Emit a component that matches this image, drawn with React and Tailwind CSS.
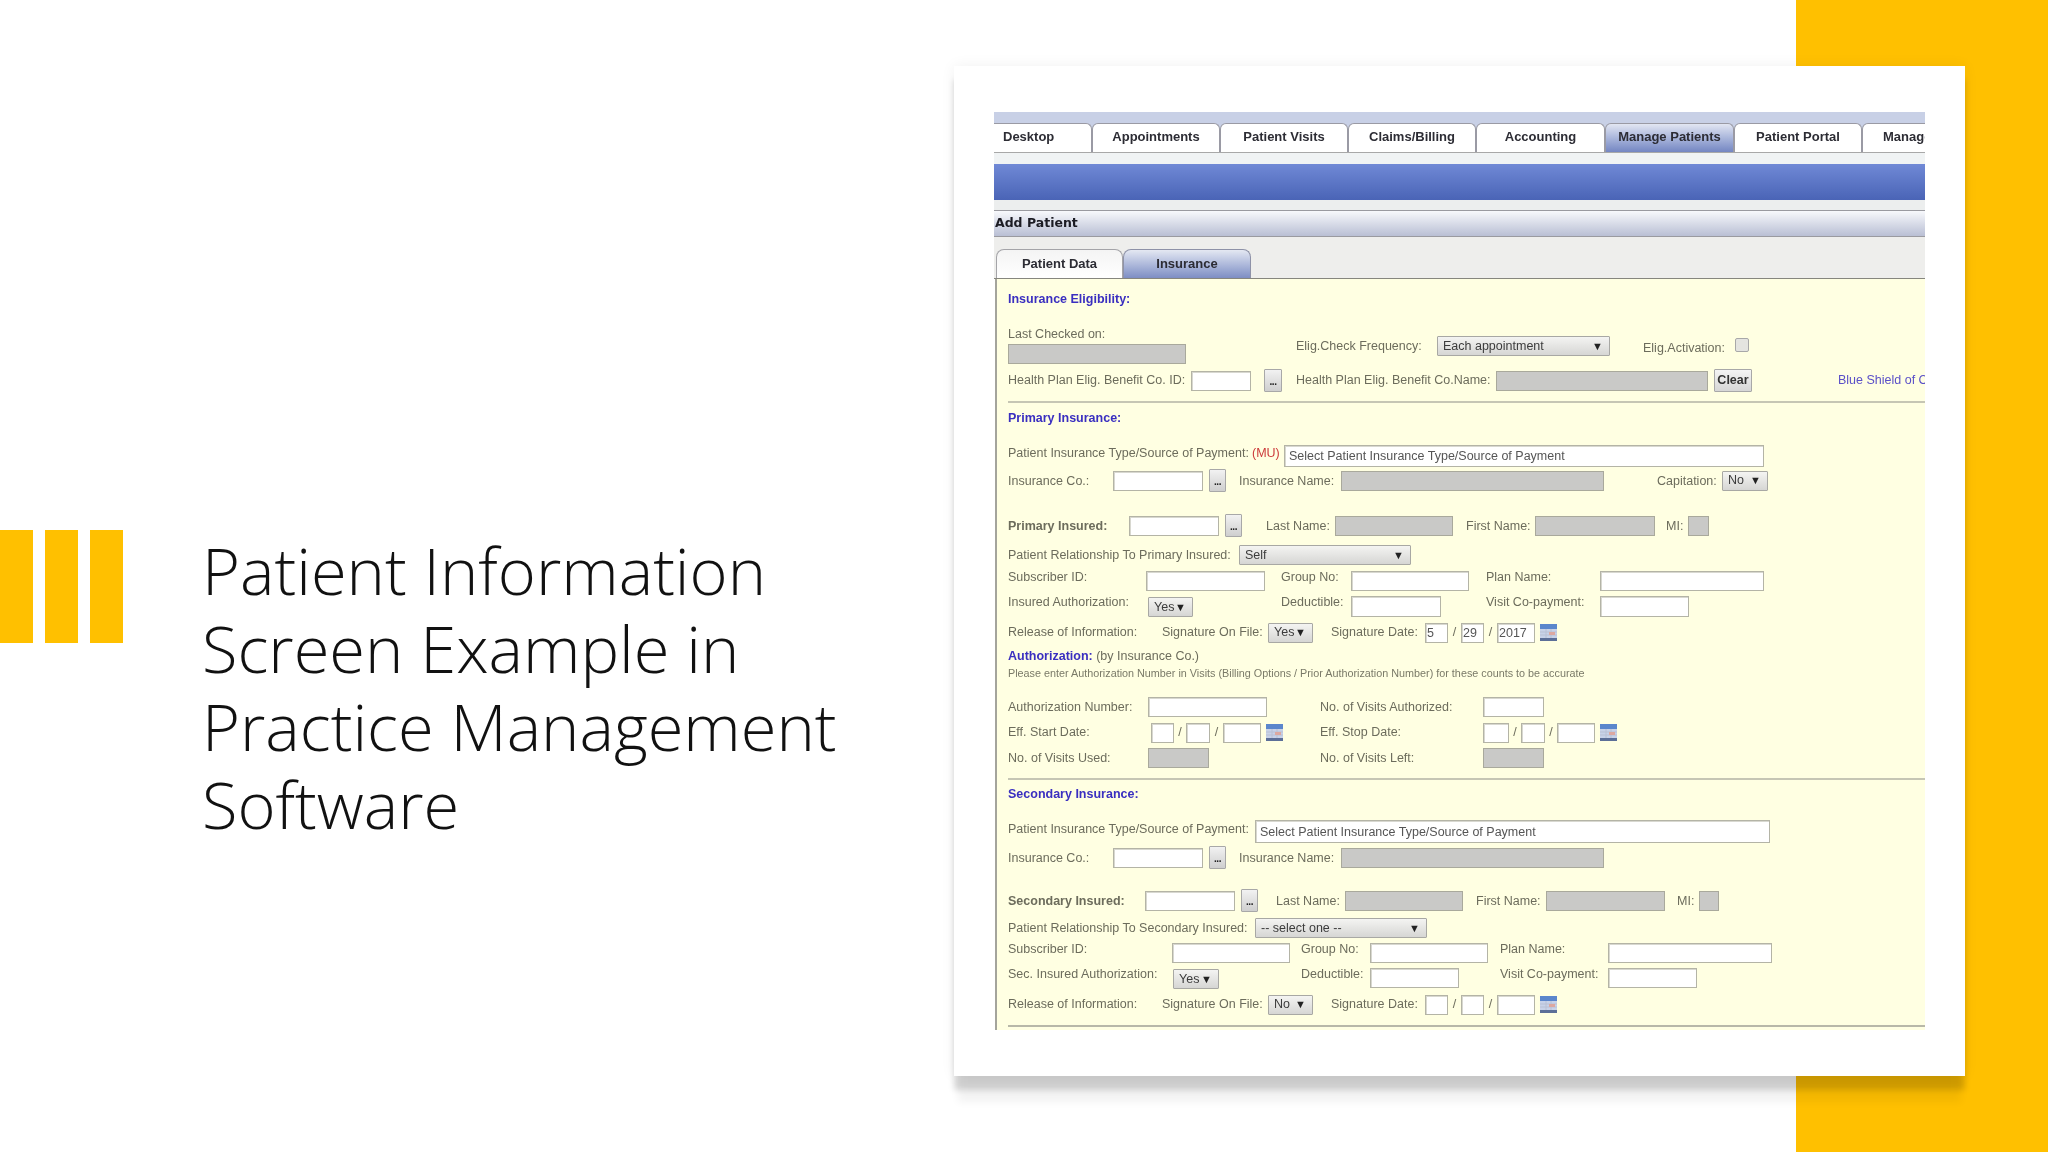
const tabs = [
  { name: 'Desktop', width: 'w-[98px]', align: 'pl-[9px] rounded-tl-none border-l-0' },
  { name: 'Appointments', width: 'w-[128px]', align: 'justify-center' },
  { name: 'Patient Visits', width: 'w-[128px]', align: 'justify-center' },
  { name: 'Claims/Billing', width: 'w-[128px]', align: 'justify-center' },
  { name: 'Accounting', width: 'w-[129px]', align: 'justify-center' },
  { name: 'Manage Patients', width: 'w-[129px]', align: 'justify-center', active: true },
  { name: 'Patient Portal', width: 'w-[128px]', align: 'justify-center' },
  { name: 'Manage', width: 'w-[128px]', align: 'pl-[20px]' },
];

const Row = ({ className = '', children }) => (
  <div className={`flex items-center whitespace-nowrap ${className}`}>{children}</div>
);

const Lbl = ({ className = '', children }) => (
  <span className={`shrink-0 text-[12.5px] text-[#6c6c5c] ${className}`}>{children}</span>
);

const Heading = ({ className = '', children }) => (
  <div className={`text-[12.5px] font-bold text-[#3a2fc0] ${className}`}>{children}</div>
);

const Field = ({ className = '', value = '' }) => (
  <input
    readOnly
    value={value}
    className={`h-[20px] shrink-0 border border-[#b4b4a6] bg-white px-[1px] font-['Liberation_Sans',sans-serif] text-[12.5px] text-[#555] shadow-[inset_1px_1px_0_#d8d8d0] ${className}`}
  />
);

const Gray = ({ className = '' }) => (
  <div className={`h-[20px] shrink-0 border border-[#a9a99c] bg-[#c9c9c7] ${className}`}></div>
);

const Dots = ({ className = '' }) => (
  <button className={`flex h-[23px] w-[17px] shrink-0 items-end justify-center rounded-[1px] border border-[#a8a8a8] bg-linear-to-b from-[#f2f2f2] to-[#cfcfcf] pb-[4px] text-[10px] leading-[10px] font-bold tracking-[-0.5px] text-[#222] ${className}`}>
    ...
  </button>
);

const Sel = ({ className = '', value }) => (
  <div className={`flex h-[20px] shrink-0 items-center justify-between rounded-[1px] border border-[#a8a8a4] bg-linear-to-b from-[#f4f4f2] to-[#d6d6d4] pr-[6px] pl-[5px] text-[12.5px] text-[#3c3c3c] ${className}`}>
    <span>{value}</span>
    <span className="text-[11px] text-[#222]">▼</span>
  </div>
);

const Slash = ({ className = '' }) => (
  <span className={`shrink-0 text-center text-[12.5px] text-[#6c6c5c] ${className}`}>/</span>
);

const Cal = ({ className = '' }) => (
  <svg viewBox="0 0 17 17" className={`h-[17px] w-[17px] shrink-0 ${className}`}>
    <rect width="17" height="17" fill="#c8d2e8" />
    <rect width="17" height="5" fill="#5b86cc" />
    <rect y="14" width="17" height="3" fill="#5c6f98" />
    <path d="M0 8h17M0 11h17M6 5v9M11 5v9" stroke="#b8c0d4" strokeWidth="1" />
    <rect x="9" y="8" width="6" height="3" fill="#dca8a0" />
  </svg>
);

const Divider = ({ className = '' }) => (
  <div className={`h-[2px] bg-[#c6c6b4] ${className}`}></div>
);

const Screenshot = () => (
  <div className="w-[931px] overflow-hidden font-['Liberation_Sans',sans-serif] blur-[0.5px]">
    {/* Main tabs */}
    <div className="h-[11px] bg-[#c8d0e6]"></div>
    <div className="flex h-[29px] bg-[#c8d0e6]">
      {tabs.map((tab) => (
        <div
          key={tab.name}
          className={`flex shrink-0 items-center overflow-hidden rounded-t-[6px] border-x border-t border-[#9a9aa4] pb-[2px] text-[13px] font-bold whitespace-nowrap text-[#2c2c34] ${tab.width} ${tab.align} ${
            tab.active ? 'bg-linear-to-b from-[#e2e6f2] to-[#7486c2]' : 'bg-white'
          }`}
        >
          {tab.name}
        </div>
      ))}
    </div>
    <div className="h-[12px] border-t border-[#a8a8a8] bg-[#f0f3f4]"></div>
    <div className="h-[36px] bg-linear-to-b from-[#7089d6] to-[#4a64b6]"></div>
    <div className="h-[10px] bg-[#eceeee]"></div>

    {/* Add Patient header */}
    <div className="flex h-[27px] items-center border-y border-[#9a9aa0] bg-linear-to-b from-[#f8f9fc] to-[#b9bfd4] pl-[1px] font-['DejaVu_Sans',sans-serif] text-[12.5px] font-bold text-[#1c1c24]">
      Add Patient
    </div>

    {/* Sub tabs */}
    <div className="flex h-[42px] items-end border-b border-[#86867e] bg-[#eeeeec] pl-[2px]">
      <div className="flex h-[29px] w-[127px] items-center justify-center rounded-t-[8px] border-x border-t border-[#a4a4a8] bg-linear-to-b from-[#f4f4f4] to-white text-[13px] font-bold text-[#2c2c34]">
        Patient Data
      </div>
      <div className="flex h-[29px] w-[128px] items-center justify-center rounded-t-[8px] border-x border-t border-[#8e92a8] bg-linear-to-b from-[#e4e8f2] to-[#7e8ec4] text-[13px] font-bold text-[#2c2c34]">
        Insurance
      </div>
    </div>

    {/* Form panel */}
    <div className="ml-[1px] h-[751px] border-l-2 border-[#a4a49c] bg-[#ffffe2] pt-[10px] pl-[11px]">
      <Heading className="h-[20px] leading-[20px]">Insurance Eligibility:</Heading>

      <Row className="mt-[16px] h-[39px] !items-start">
        <div className="w-[288px] shrink-0">
          <Lbl className="block h-[18px] leading-[18px]">Last Checked on:</Lbl>
          <Gray className="mt-[1px] w-[178px]" />
        </div>
        <Lbl className="mt-[11px] h-[20px] w-[141px] leading-[20px]">Elig.Check Frequency:</Lbl>
        <Sel className="mt-[11px] w-[173px]" value="Each appointment" />
        <Lbl className="mt-[13px] ml-[33px] h-[20px] w-[92px] leading-[20px]">Elig.Activation:</Lbl>
        <div className="mt-[13px] h-[14px] w-[14px] rounded-[2px] border border-[#a8a8a8] bg-[#e4e4e0]"></div>
      </Row>

      <Row className="mt-[5px] h-[23px]">
        <Lbl className="w-[183px]">Health Plan Elig. Benefit Co. ID:</Lbl>
        <Field className="w-[60px]" />
        <Dots className="ml-[13px] w-[18px]" />
        <Lbl className="ml-[14px] w-[200px]">Health Plan Elig. Benefit Co.Name:</Lbl>
        <Gray className="w-[212px]" />
        <button className="ml-[6px] h-[23px] w-[38px] shrink-0 rounded-[1px] border border-[#a8a8a8] bg-linear-to-b from-[#f4f4f4] to-[#d6d6d6] text-[12.5px] font-bold text-[#333]">
          Clear
        </button>
        <span className="ml-[86px] text-[12.5px] text-[#5a50c8]">Blue Shield of California</span>
      </Row>

      <Divider className="mt-[9px]" />

      {/* Primary insurance */}
      <Heading className="mt-[5px] h-[20px] leading-[20px]">Primary Insurance:</Heading>

      <Row className="mt-[17px] h-[22px] !items-start">
        <Lbl className="h-[16px] w-[244px] leading-[16px]">Patient Insurance Type/Source of Payment:</Lbl>
        <Lbl className="h-[16px] w-[32px] leading-[16px] !text-[#cc3a3a]">(MU)</Lbl>
        <Field className="!h-[22px] w-[480px] px-[4px]" value="Select Patient Insurance Type/Source of Payment" />
      </Row>

      <Row className="mt-[2px] h-[23px]">
        <Lbl className="w-[105px] pt-[1px]">Insurance Co.:</Lbl>
        <Field className="w-[90px]" />
        <Dots className="ml-[6px]" />
        <Lbl className="ml-[13px] w-[102px] pt-[1px]">Insurance Name:</Lbl>
        <Gray className="w-[263px]" />
        <Lbl className="ml-[53px] w-[65px] pt-[1px]">Capitation:</Lbl>
        <Sel className="w-[46px]" value="No" />
      </Row>

      <Row className="mt-[22px] h-[23px]">
        <Lbl className="w-[121px] pt-[1px] font-bold">Primary Insured:</Lbl>
        <Field className="w-[90px]" />
        <Dots className="ml-[6px]" />
        <Lbl className="ml-[24px] w-[69px] pt-[1px]">Last Name:</Lbl>
        <Gray className="w-[118px]" />
        <Lbl className="ml-[13px] w-[69px] pt-[1px]">First Name:</Lbl>
        <Gray className="w-[120px]" />
        <Lbl className="ml-[11px] w-[22px] pt-[1px]">MI:</Lbl>
        <Gray className="w-[21px]" />
      </Row>

      <Row className="mt-[8px] h-[20px]">
        <Lbl className="w-[231px]">Patient Relationship To Primary Insured:</Lbl>
        <Sel className="w-[172px]" value="Self" />
      </Row>

      <Row className="mt-[6px] h-[20px] !items-start">
        <Lbl className="h-[12px] w-[138px] leading-[12px]">Subscriber ID:</Lbl>
        <Field className="w-[119px]" />
        <Lbl className="ml-[16px] h-[12px] w-[70px] leading-[12px]">Group No:</Lbl>
        <Field className="w-[118px]" />
        <Lbl className="ml-[17px] h-[12px] w-[114px] leading-[12px]">Plan Name:</Lbl>
        <Field className="w-[164px]" />
      </Row>

      <Row className="mt-[5px] h-[21px] !items-start">
        <Lbl className="h-[12px] w-[140px] leading-[12px]">Insured Authorization:</Lbl>
        <Sel className="mt-[1px] w-[45px]" value="Yes" />
        <Lbl className="ml-[88px] h-[12px] w-[70px] leading-[12px]">Deductible:</Lbl>
        <Field className="!h-[21px] w-[90px]" />
        <Lbl className="ml-[45px] h-[12px] w-[114px] leading-[12px]">Visit Co-payment:</Lbl>
        <Field className="!h-[21px] w-[89px]" />
      </Row>

      <Row className="mt-[5px] h-[21px]">
        <Lbl className="w-[154px]">Release of Information:</Lbl>
        <Lbl className="w-[106px]">Signature On File:</Lbl>
        <Sel className="w-[45px]" value="Yes" />
        <Lbl className="ml-[18px] w-[94px]">Signature Date:</Lbl>
        <Field className="w-[23px]" value="5" />
        <Slash className="w-[13px]" />
        <Field className="w-[23px]" value="29" />
        <Slash className="w-[13px]" />
        <Field className="w-[38px]" value="2017" />
        <Cal className="ml-[5px]" />
      </Row>

      {/* Authorization */}
      <div className="mt-[5px] h-[17px] text-[12.5px] leading-[17px] text-[#6c6c5c]">
        <span className="font-bold text-[#3a2fc0]">Authorization:</span> (by Insurance Co.)
      </div>
      <div className="h-[16px] text-[10.8px] leading-[16px] whitespace-nowrap text-[#7a7a68]">
        Please enter Authorization Number in Visits (Billing Options / Prior Authorization Number) for these counts to be accurate
      </div>

      <Row className="mt-[16px] h-[20px]">
        <Lbl className="w-[140px]">Authorization Number:</Lbl>
        <Field className="w-[119px]" />
        <Lbl className="ml-[53px] w-[163px]">No. of Visits Authorized:</Lbl>
        <Field className="w-[61px]" />
      </Row>

      <Row className="mt-[5px] h-[21px]">
        <Lbl className="w-[143px]">Eff. Start Date:</Lbl>
        <Field className="w-[23px]" />
        <Slash className="w-[12px]" />
        <Field className="w-[24px]" />
        <Slash className="w-[13px]" />
        <Field className="w-[38px]" />
        <Cal className="ml-[5px]" />
        <Lbl className="ml-[37px] w-[163px]">Eff. Stop Date:</Lbl>
        <Field className="w-[26px]" />
        <Slash className="w-[12px]" />
        <Field className="w-[24px]" />
        <Slash className="w-[12px]" />
        <Field className="w-[38px]" />
        <Cal className="ml-[5px]" />
      </Row>

      <Row className="mt-[5px] h-[20px]">
        <Lbl className="w-[140px]">No. of Visits Used:</Lbl>
        <Gray className="w-[61px]" />
        <Lbl className="ml-[111px] w-[163px]">No. of Visits Left:</Lbl>
        <Gray className="w-[61px]" />
      </Row>

      <Divider className="mt-[10px]" />

      {/* Secondary insurance */}
      <Heading className="mt-[5px] h-[18px] leading-[18px]">Secondary Insurance:</Heading>

      <Row className="mt-[17px] h-[23px] !items-start">
        <Lbl className="h-[18px] w-[247px] leading-[18px]">Patient Insurance Type/Source of Payment:</Lbl>
        <Field className="!h-[23px] w-[515px] px-[4px]" value="Select Patient Insurance Type/Source of Payment" />
      </Row>

      <Row className="mt-[3px] h-[23px]">
        <Lbl className="w-[105px] pt-[1px]">Insurance Co.:</Lbl>
        <Field className="w-[90px]" />
        <Dots className="ml-[6px]" />
        <Lbl className="ml-[13px] w-[102px] pt-[1px]">Insurance Name:</Lbl>
        <Gray className="w-[263px]" />
      </Row>

      <Row className="mt-[20px] h-[23px]">
        <Lbl className="w-[137px] pt-[1px] font-bold">Secondary Insured:</Lbl>
        <Field className="w-[90px]" />
        <Dots className="ml-[6px]" />
        <Lbl className="ml-[18px] w-[69px] pt-[1px]">Last Name:</Lbl>
        <Gray className="w-[118px]" />
        <Lbl className="ml-[13px] w-[70px] pt-[1px]">First Name:</Lbl>
        <Gray className="w-[119px]" />
        <Lbl className="ml-[12px] w-[22px] pt-[1px]">MI:</Lbl>
        <Gray className="w-[20px]" />
      </Row>

      <Row className="mt-[6px] h-[20px]">
        <Lbl className="w-[247px]">Patient Relationship To Secondary Insured:</Lbl>
        <Sel className="w-[172px]" value="-- select one --" />
      </Row>

      <Row className="mt-[5px] h-[20px] !items-start">
        <Lbl className="h-[12px] w-[164px] leading-[12px]">Subscriber ID:</Lbl>
        <Field className="w-[118px]" />
        <Lbl className="ml-[11px] h-[12px] w-[69px] leading-[12px]">Group No:</Lbl>
        <Field className="w-[118px]" />
        <Lbl className="ml-[12px] h-[12px] w-[108px] leading-[12px]">Plan Name:</Lbl>
        <Field className="w-[164px]" />
      </Row>

      <Row className="mt-[5px] h-[21px] !items-start">
        <Lbl className="h-[12px] w-[165px] leading-[12px]">Sec. Insured Authorization:</Lbl>
        <Sel className="mt-[1px] w-[46px]" value="Yes" />
        <Lbl className="ml-[82px] h-[12px] w-[69px] leading-[12px]">Deductible:</Lbl>
        <Field className="w-[89px]" />
        <Lbl className="ml-[41px] h-[12px] w-[108px] leading-[12px]">Visit Co-payment:</Lbl>
        <Field className="w-[89px]" />
      </Row>

      <Row className="mt-[5px] h-[21px]">
        <Lbl className="w-[154px]">Release of Information:</Lbl>
        <Lbl className="w-[106px]">Signature On File:</Lbl>
        <Sel className="w-[45px]" value="No" />
        <Lbl className="ml-[18px] w-[94px]">Signature Date:</Lbl>
        <Field className="w-[23px]" />
        <Slash className="w-[13px]" />
        <Field className="w-[23px]" />
        <Slash className="w-[13px]" />
        <Field className="w-[38px]" />
        <Cal className="ml-[5px]" />
      </Row>

      <div className="mt-[10px] h-[2px] bg-[#b8b8a8]"></div>
    </div>
  </div>
);

const App = () => {
  return (
    <div className="relative flex h-[1152px] w-[2048px] items-start overflow-hidden bg-white">
      {/* Yellow stripe behind the card */}
      <div className="absolute top-0 right-0 h-full w-[252px] bg-[#ffc000]"></div>

      <div className="mt-[530px] flex w-[123px] shrink-0 gap-[12px]">
        <div className="h-[113px] w-[33px] bg-[#ffc000]"></div>
        <div className="h-[113px] w-[33px] bg-[#ffc000]"></div>
        <div className="h-[113px] w-[33px] bg-[#ffc000]"></div>
      </div>

      <h1 className="mt-[531px] ml-[79px] w-[680px] shrink-0 font-['Open_Sans',sans-serif] text-[65px] leading-[78px] font-light text-[#111]">
        Patient Information Screen Example in Practice Management Software
      </h1>

      <div className="relative mt-[66px] ml-[72px] h-[1010px] w-[1011px] shrink-0 bg-white pt-[46px] pl-[40px] shadow-[0_14px_6px_0_rgba(0,0,0,0.15),0_30px_8px_-4px_rgba(0,0,0,0.05),0_0_14px_rgba(0,0,0,0.06)]">
        <Screenshot />
      </div>
    </div>
  );
};

export default App;
